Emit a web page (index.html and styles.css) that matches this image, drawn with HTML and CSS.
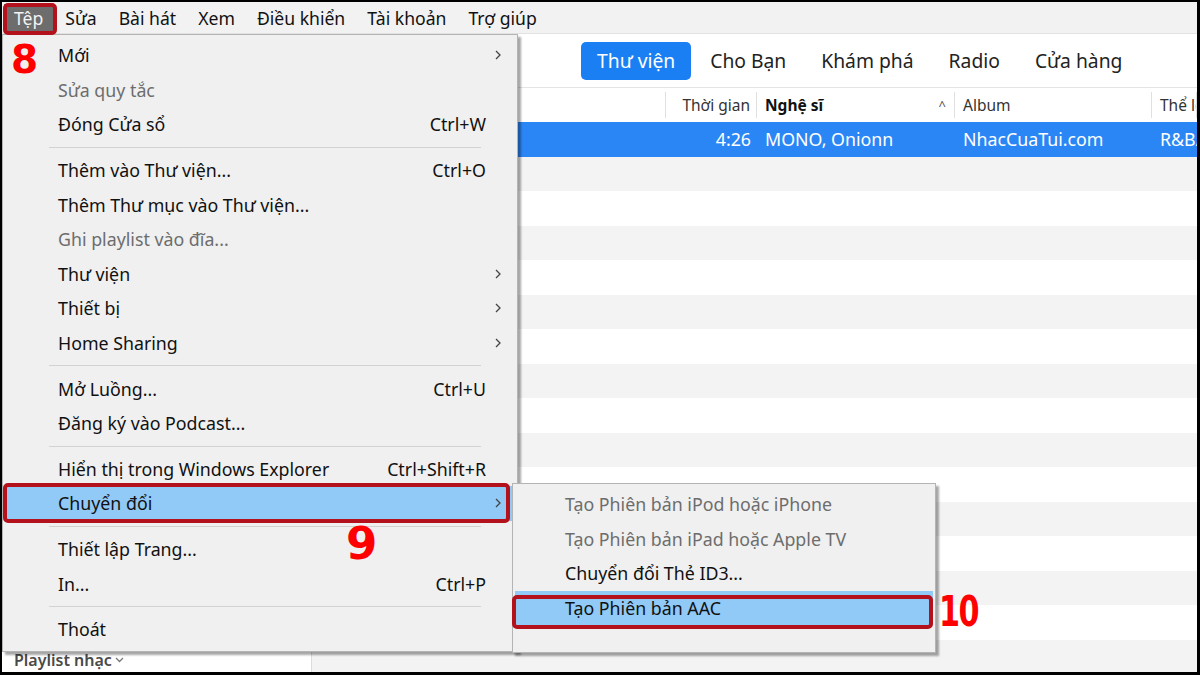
FILE: index.html
```html
<!DOCTYPE html>
<html>
<head>
	<title>iTunes - Tệp</title>
	<link rel="stylesheet" href="styles.css">
</head>
<body>

	<div class="app">

		<div class="menubar">
			<span class="mb-item open">Tệp</span>
			<span class="mb-item">Sửa</span>
			<span class="mb-item">Bài hát</span>
			<span class="mb-item">Xem</span>
			<span class="mb-item">Điều khiển</span>
			<span class="mb-item">Tài khoản</span>
			<span class="mb-item">Trợ giúp</span>
		</div>

		<div class="window">
			<div class="sidebar">
				<div class="side-title">Playlist nhạc
					<svg class="chev" width="9" height="6" viewBox="0 0 9 6"><polyline points="1,1 4.5,4.5 8,1" fill="none" stroke="#777" stroke-width="1.3"/></svg>
				</div>
			</div>

			<div class="main">
				<div class="tabs">
					<span class="tab active">Thư viện</span>
					<span class="tab">Cho Bạn</span>
					<span class="tab">Khám phá</span>
					<span class="tab">Radio</span>
					<span class="tab">Cửa hàng</span>
				</div>

				<div class="grid header">
					<span class="cell"></span>
					<span class="cell right">Thời gian</span>
					<span class="cell bold">Nghệ sĩ <span class="sort">^</span></span>
					<span class="cell">Album</span>
					<span class="cell">Thể loại</span>
				</div>

				<div class="rows">
					<div class="grid row sel">
						<span class="cell"></span>
						<span class="cell right">4:26</span>
						<span class="cell">MONO, Onionn</span>
						<span class="cell">NhacCuaTui.com</span>
						<span class="cell">R&amp;B/Soul</span>
					</div>
					<div class="grid row"></div>
					<div class="grid row"></div>
					<div class="grid row"></div>
					<div class="grid row"></div>
					<div class="grid row"></div>
					<div class="grid row"></div>
					<div class="grid row"></div>
					<div class="grid row"></div>
					<div class="grid row"></div>
					<div class="grid row"></div>
					<div class="grid row"></div>
					<div class="grid row"></div>
					<div class="grid row"></div>
					<div class="grid row"></div>
					<div class="grid row"></div>
				</div>
			</div>
		</div>

		<!-- File menu dropdown -->
		<div class="menu file-menu">
			<div class="mi"><span class="lbl">Mới</span><span class="key"></span><span class="arr"><svg width="6" height="10" viewBox="0 0 6 10"><polyline points="1,1 5,5 1,9" fill="none" stroke="#444" stroke-width="1.3"/></svg></span></div>
			<div class="mi off"><span class="lbl">Sửa quy tắc</span><span class="key"></span><span class="arr"></span></div>
			<div class="mi"><span class="lbl">Đóng Cửa sổ</span><span class="key">Ctrl+W</span><span class="arr"></span></div>
			<div class="sep"></div>
			<div class="mi"><span class="lbl">Thêm vào Thư viện...</span><span class="key">Ctrl+O</span><span class="arr"></span></div>
			<div class="mi"><span class="lbl">Thêm Thư mục vào Thư viện...</span><span class="key"></span><span class="arr"></span></div>
			<div class="mi off"><span class="lbl">Ghi playlist vào đĩa...</span><span class="key"></span><span class="arr"></span></div>
			<div class="mi"><span class="lbl">Thư viện</span><span class="key"></span><span class="arr"><svg width="6" height="10" viewBox="0 0 6 10"><polyline points="1,1 5,5 1,9" fill="none" stroke="#444" stroke-width="1.3"/></svg></span></div>
			<div class="mi"><span class="lbl">Thiết bị</span><span class="key"></span><span class="arr"><svg width="6" height="10" viewBox="0 0 6 10"><polyline points="1,1 5,5 1,9" fill="none" stroke="#444" stroke-width="1.3"/></svg></span></div>
			<div class="mi"><span class="lbl">Home Sharing</span><span class="key"></span><span class="arr"><svg width="6" height="10" viewBox="0 0 6 10"><polyline points="1,1 5,5 1,9" fill="none" stroke="#444" stroke-width="1.3"/></svg></span></div>
			<div class="sep"></div>
			<div class="mi"><span class="lbl">Mở Luồng...</span><span class="key">Ctrl+U</span><span class="arr"></span></div>
			<div class="mi"><span class="lbl">Đăng ký vào Podcast...</span><span class="key"></span><span class="arr"></span></div>
			<div class="sep"></div>
			<div class="mi"><span class="lbl">Hiển thị trong Windows Explorer</span><span class="key">Ctrl+Shift+R</span><span class="arr"></span></div>
			<div class="mi hot"><span class="lbl">Chuyển đổi</span><span class="key"></span><span class="arr"><svg width="6" height="10" viewBox="0 0 6 10"><polyline points="1,1 5,5 1,9" fill="none" stroke="#444" stroke-width="1.3"/></svg></span></div>
			<div class="sep"></div>
			<div class="mi"><span class="lbl">Thiết lập Trang...</span><span class="key"></span><span class="arr"></span></div>
			<div class="mi"><span class="lbl">In...</span><span class="key">Ctrl+P</span><span class="arr"></span></div>
			<div class="sep"></div>
			<div class="mi"><span class="lbl">Thoát</span><span class="key"></span><span class="arr"></span></div>
		</div>

		<!-- Convert submenu -->
		<div class="menu sub-menu">
			<div class="mi off"><span class="lbl">Tạo Phiên bản iPod hoặc iPhone</span></div>
			<div class="mi off"><span class="lbl">Tạo Phiên bản iPad hoặc Apple TV</span></div>
			<div class="mi"><span class="lbl">Chuyển đổi Thẻ ID3...</span></div>
			<div class="mi hot"><span class="lbl">Tạo Phiên bản AAC</span></div>
		</div>

		<!-- step marks -->
		<div class="mark box-file"></div>
		<div class="mark box-convert"></div>
		<div class="mark box-aac"></div>
		<div class="step step8">8</div>
		<div class="step step9">9</div>
		<div class="step step10">10</div>

	</div>

</body>
</html>
```

FILE: styles.css
```css
body {
	margin: 0;
	background: #000;
	font-family: "Noto Sans", "Open Sans", sans-serif;
	color: #111;
}

.app {
	position: relative;
	width: 1195px;
	height: 670px;
	margin: 2px 3px 3px 2px;
	background: #fff;
	overflow: hidden;
	display: flex;
	flex-direction: column;
}

/* top menu bar */
.menubar {
	height: 31px;
	flex: none;
	background: #f2f2f2;
	border-bottom: 1px solid #e2e2e2;
	display: flex;
	align-items: center;
	padding-left: 2px;
	gap: 2px;
	font-size: 17.6px;
}

.mb-item {
	height: 27px;
	padding: 0 10px;
	display: flex;
	align-items: center;
}

.mb-item.open {
	background: #6d6d6d;
	color: #f4f4f4;
}

/* window body */
.window {
	flex: 1;
	display: flex;
	min-height: 0;
}

.sidebar {
	width: 309px;
	flex: none;
	border-right: 1px solid #dcdcdc;
	display: flex;
	flex-direction: column;
	justify-content: flex-end;
}

.side-title {
	height: 25px;
	padding-left: 12px;
	font-size: 16px;
	font-weight: 600;
	color: #4a4a4a;
	display: flex;
	align-items: center;
	gap: 3px;
}

.main {
	flex: 1;
	display: flex;
	flex-direction: column;
	min-width: 0;
}

.tabs {
	height: 53px;
	flex: none;
	border-bottom: 1px solid #e4e4e4;
	display: flex;
	align-items: center;
	padding-left: 269px;
	gap: 3px;
	font-size: 19.3px;
	color: #222;
}

.tab {
	height: 38px;
	padding: 0 16px;
	display: flex;
	align-items: center;
	border-radius: 5px;
	white-space: nowrap;
}

.tab.active {
	background: #1b7ff4;
	color: #fff;
}

.grid {
	display: grid;
	grid-template-columns: 354px 91px 198px 197px 1fr;
	align-items: center;
}

.header {
	height: 34px;
	flex: none;
	font-size: 15.5px;
	color: #333;
}

.header .cell {
	height: 26px;
	border-right: 1px solid #e0e0e0;
}

.cell {
	display: flex;
	align-items: center;
	padding: 0 8px;
	white-space: nowrap;
	overflow: hidden;
}

.cell.right {
	justify-content: flex-end;
	padding-right: 6px;
}

.cell.bold {
	font-weight: 700;
	color: #111;
	justify-content: space-between;
}

.sort {
	font-weight: 400;
	font-size: 13px;
	color: #555;
}

.rows {
	flex: 1;
	overflow: hidden;
}

.row {
	height: 34.5px;
}

.row:nth-child(even) {
	background: #f3f3f3;
}

.row.sel {
	background: #2b86f5;
	color: #fff;
	font-size: 17.8px;
}

/* dropdown menus */
.menu {
	position: absolute;
	box-sizing: border-box;
	background: #f0f0f0;
	border: 1px solid #b4b4b4;
	box-shadow: 3px 3px 2px rgba(0, 0, 0, 0.35);
	font-size: 17.8px;
}

.file-menu {
	left: 0;
	top: 32px;
	width: 516px;
	height: 618px;
	padding: 3px 0;
}

.sub-menu {
	left: 510px;
	top: 481px;
	width: 424px;
	height: 170px;
	padding: 3px 0;
}

.mi {
	height: 34.6px;
	display: flex;
	align-items: center;
	padding-left: 53px;
	padding-right: 5px;
	margin: 0 2px;
	white-space: nowrap;
}

.sub-menu .mi {
	padding-left: 50px;
}

.mi .lbl {
	flex: 1;
}

.mi .arr {
	width: 24px;
	display: flex;
	justify-content: center;
}

.mi.off {
	color: #6d6d6d;
}

.mi.hot {
	background: #91c9f7;
}

.sep {
	height: 11px;
	display: flex;
	align-items: center;
}

.sep::after {
	content: "";
	margin-left: 46px;
	width: 432px;
	border-top: 1px solid #d2d2d2;
}

/* red callouts */
.mark {
	position: absolute;
	box-sizing: border-box;
	border: 4px solid #b3121c;
	border-radius: 5px;
}

.box-file {
	left: 1px;
	top: 1px;
	width: 54px;
	height: 32px;
}

.box-convert {
	left: 1px;
	top: 481px;
	width: 507px;
	height: 40px;
}

.box-aac {
	left: 510px;
	top: 593px;
	width: 421px;
	height: 34px;
}

.step {
	position: absolute;
	color: #ff0000;
	font-family: "DejaVu Sans", sans-serif;
	font-weight: 700;
	line-height: 1;
}

.step8 {
	left: 9px;
	top: 38px;
	font-size: 39px;
}

.step9 {
	left: 344px;
	top: 519px;
	font-size: 45px;
}

.step10 {
	left: 937px;
	top: 589px;
	font-size: 42px;
	letter-spacing: -2px;
	transform: scaleX(0.72);
	transform-origin: left top;
}
```
